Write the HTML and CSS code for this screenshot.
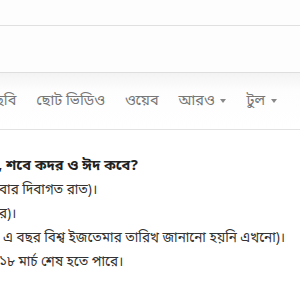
FILE: index.html
```html
<!DOCTYPE html>
<html lang="bn">
<head>
    <meta charset="UTF-8">
    <title>শবে কদর ও ঈদ কবে</title>
    <link rel="stylesheet" href="styles.css">
</head>
<body>
    <div class="top-bar"></div>
    <div class="search-bar"></div>

    <nav class="tabs">
        <a href="#" class="tab tab-first">ছবি</a>
        <a href="#" class="tab">ছোট ভিডিও</a>
        <a href="#" class="tab">ওয়েব</a>
        <a href="#" class="tab">আরও <span class="caret"></span></a>
        <a href="#" class="tab">টুল <span class="caret"></span></a>
    </nav>

    <div class="content">
        <p class="headline">, শবে কদর ও ঈদ কবে?</p>
        <p class="cut">বার দিবাগত রাত)।</p>
        <p class="cut">র)।</p>
        <p>এ বছর বিশ্ব ইজতেমার তারিখ জানানো হয়নি এখনো)।</p>
        <p class="cut">১৮ মার্চ শেষ হতে পারে।</p>
    </div>
</body>
</html>
```

FILE: styles.css
```css
* {
    margin: 0;
    padding: 0;
    box-sizing: border-box;
}

body {
    background: #fff;
    font-family: "Noto Sans Bengali", "Noto Sans", sans-serif;
    width: 300px;
    overflow: hidden;
}

.top-bar {
    height: 26px;
    background: #fdfdfd;
    border-bottom: 1px solid #e0e0e0;
}

.search-bar {
    height: 47px;
    background: #fdfdfd;
    border-bottom: 1px solid #dedede;
}

.tabs {
    height: 57px;
    display: flex;
    align-items: center;
    white-space: nowrap;
    background: linear-gradient(#f3f3f3, #fdfdfd 30%, #fff);
    border-bottom: 1px solid #e2e2e2;
}

.tab {
    color: #777;
    text-decoration: none;
    font-size: 14.5px;
    margin-right: 20px;
}

.tab-first {
    margin-left: -5px;
}

.caret {
    display: inline-block;
    width: 0;
    height: 0;
    margin-left: 2px;
    vertical-align: middle;
    border-top: 4px solid #888;
    border-left: 3px solid transparent;
    border-right: 3px solid transparent;
}

.content {
    padding-top: 25px;
    color: #333;
    font-size: 13.5px;
    line-height: 24px;
    white-space: nowrap;
}

.content p {
    margin-left: 3px;
}

.content .cut {
    margin-left: -1px;
}

.content .headline {
    font-weight: bold;
    font-size: 14.5px;
    color: #222;
    margin-left: -2px;
}
```
